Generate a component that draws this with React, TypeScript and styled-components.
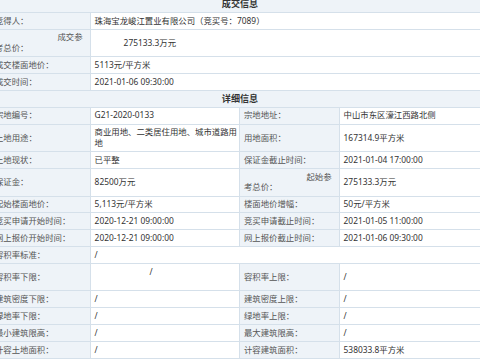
import styled, { createGlobalStyle, css } from "styled-components"

const COLORS = {
  border: "#d5e0ea",
  shade: "#eef3f8",
  label: "#555",
  text: "#333",
}

const GlobalStyle = createGlobalStyle`
  * { box-sizing: border-box; }
  body {
    margin: 0;
    overflow: hidden;
    background: #fff;
    font-family: "Noto Sans", "Noto Sans CJK SC", sans-serif;
    font-size: 8.4px;
    color: ${COLORS.text};
  }
`

const Page = styled.div`
  width: 498px;
  margin: -3.85px 0 0 -9px;
`

const SectionTitle = styled.div`
  padding: 2.6px 0;
  line-height: 10.65px;
  text-align: center;
  font-size: 9.1px;
  font-weight: bold;
  color: #333;
  background: ${COLORS.shade};
  border-bottom: 1px solid ${COLORS.border};
`

const Row = styled.div<{ $wide?: boolean }>`
  display: grid;
  grid-template-columns: ${({ $wide }) => ($wide ? "20% 80%" : "20% 30% 20% 30%")};
  border-bottom: 1px solid ${COLORS.border};
`

const cellCss = css`
  display: flex;
  align-items: center;
  min-width: 0;
  padding: 2.6px 1px 2.6px 4px;
  line-height: 10.65px;
  border-right: 1px solid ${COLORS.border};
`

const Label = styled.div`
  ${cellCss}
  background: ${COLORS.shade};
  color: ${COLORS.label};
  white-space: nowrap;
`

const SplitLabel = styled(Label)`
  flex-direction: column;
  align-items: stretch;
`

const SplitHead = styled.span`
  text-align: right;
  padding-right: 6px;
`

const Value = styled.div<{ $span?: number; $indent?: number; $top?: boolean }>`
  ${cellCss}
  grid-column: span ${({ $span }) => $span ?? 1};
  padding-left: ${({ $indent }) => 4 + ($indent ?? 0)}px;
  color: ${COLORS.text};
  background: #fff;
  ${({ $top }) =>
    $top &&
    css`
      align-items: flex-start;
      min-height: 26.5px;
    `}
`

const detail: [string, string, string, string][] = [
  ["宗地编号：", "G21-2020-0133", "宗地地址：", "中山市东区濠江西路北侧"],
  ["土地用途：", "商业用地、二类居住用地、城市道路用地", "用地面积：", "167314.9平方米"],
  ["土地现状：", "已平整", "保证金截止时间：", "2021-01-04 17:00:00"],
]

const detailMore: [string, string, string, string][] = [
  ["起始楼面地价：", "5,113元/平方米", "楼面地价增幅：", "50元/平方米"],
  ["竞买申请开始时间：", "2020-12-21 09:00:00", "竞买申请截止时间：", "2021-01-05 11:00:00"],
  ["网上报价开始时间：", "2020-12-21 09:00:00", "网上报价截止时间：", "2021-01-06 09:30:00"],
]

const limits: [string, string, string, string][] = [
  ["建筑密度下限：", "/", "建筑密度上限：", "/"],
  ["绿地率下限：", "/", "绿地率上限：", "/"],
  ["最小建筑限高：", "/", "最大建筑限高：", "/"],
  ["计容土地面积：", "/", "计容建筑面积：", "538033.8平方米"],
]

const Quad = ({ cells }: { cells: [string, string, string, string] }) => (
  <Row>
    <Label>{cells[0]}</Label>
    <Value>{cells[1]}</Value>
    <Label>{cells[2]}</Label>
    <Value>{cells[3]}</Value>
  </Row>
)

const App = () => (
  <Page>
    <GlobalStyle />
    <SectionTitle>成交信息</SectionTitle>
    <Row $wide>
      <Label>竞得人：</Label>
      <Value>珠海宝龙峻江置业有限公司（竞买号：7089）</Value>
    </Row>
    <Row $wide>
      <SplitLabel>
        <SplitHead>成交参</SplitHead>
        <span>考总价：</span>
      </SplitLabel>
      <Value $indent={29}>275133.3万元</Value>
    </Row>
    <Row $wide>
      <Label>成交楼面地价：</Label>
      <Value>5113元/平方米</Value>
    </Row>
    <Row $wide>
      <Label>成交时间：</Label>
      <Value>2021-01-06 09:30:00</Value>
    </Row>

    <SectionTitle>详细信息</SectionTitle>
    {detail.map((cells) => (
      <Quad key={cells[0]} cells={cells} />
    ))}
    <Row>
      <Label>保证金：</Label>
      <Value>82500万元</Value>
      <SplitLabel>
        <SplitHead>起始参</SplitHead>
        <span>考总价：</span>
      </SplitLabel>
      <Value>275133.3万元</Value>
    </Row>
    {detailMore.map((cells) => (
      <Quad key={cells[0]} cells={cells} />
    ))}
    <Row>
      <Label>容积率标准：</Label>
      <Value $span={3}>/</Value>
    </Row>
    <Row>
      <Label>容积率下限：</Label>
      <Value $top $indent={55}>/</Value>
      <Label>容积率上限：</Label>
      <Value>/</Value>
    </Row>
    {limits.map((cells) => (
      <Quad key={cells[0]} cells={cells} />
    ))}
  </Page>
)

export default App
